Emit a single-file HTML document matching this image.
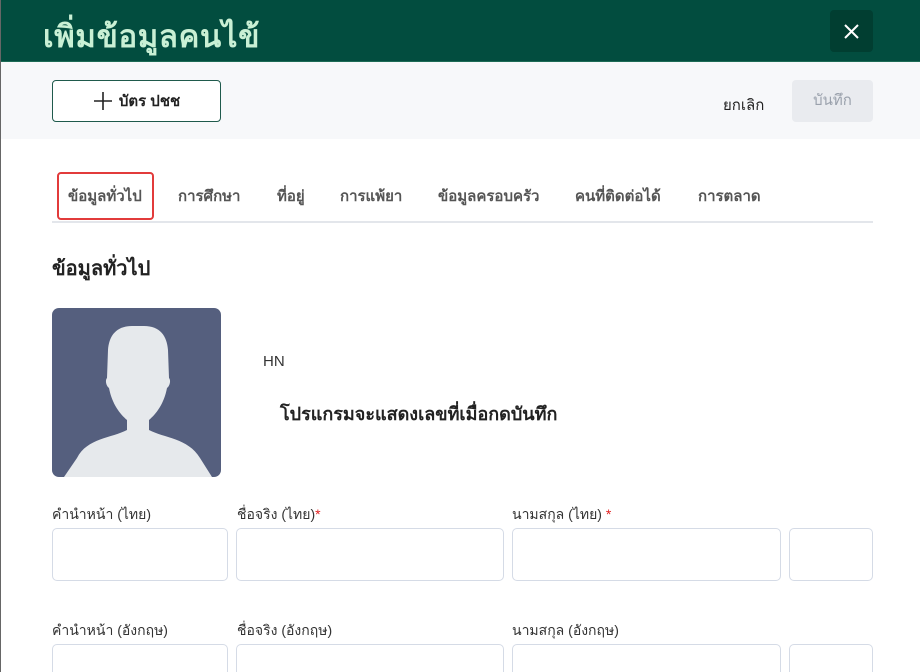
<!DOCTYPE html>
<html style="overflow:hidden;width:920px;height:672px"><head><meta charset="utf-8"><style>
*{box-sizing:border-box;margin:0;padding:0}
body{width:920px;height:672px;overflow:hidden;background:#fff;font-family:"Liberation Sans","Noto Sans CJK SC",sans-serif;position:relative}
.lb{position:absolute;left:0;top:0;width:1px;height:672px;background:#666;z-index:5}
.hdr{position:absolute;left:0;top:0;width:920px;height:62px;background:#024d3f;border-bottom:1px solid #1d6b55}
.hdr h1{position:absolute;left:43px;top:11px;font-size:31px;font-weight:bold;color:#c9f0d5;letter-spacing:0.7px}
.x{position:absolute;left:830px;top:10px;width:43px;height:42px;background:#013e31;border-radius:4px}
.bar{position:absolute;left:0;top:62px;width:920px;height:77px;background:#f7f8fa}
.btn1{position:absolute;left:52px;top:80px;width:169px;height:42px;border:1px solid #1f5a4c;border-radius:4px;background:#fff;font-size:15px;font-weight:bold;color:#222;display:flex;align-items:center;justify-content:center;gap:6px}
.cancel{position:absolute;left:723px;top:93px;font-size:15px;color:#222}
.save{position:absolute;left:792px;top:80px;width:81px;height:42px;background:#e9ebef;border-radius:4px;color:#9aa1ac;font-size:15px;text-align:center;line-height:42px}
.tab{position:absolute;top:184px;font-size:15px;color:#555;font-weight:bold}
.sel{position:absolute;left:57px;top:172px;width:97px;height:48px;border:2.5px solid #e23b3b;border-radius:4px}
.line{position:absolute;left:52px;top:221px;width:821px;height:2px;background:#e3e6eb}
h2{position:absolute;left:52px;top:252px;font-size:20px;font-weight:bold;color:#222}
.av{position:absolute;left:52px;top:308px;width:169px;height:169px;background:#555f7e;border-radius:7px;overflow:hidden}
.lbl{position:absolute;font-size:14px;color:#333}
.in{position:absolute;height:53px;border:1px solid #d5dbe6;border-radius:5px;background:#fff}
</style></head><body>
<div class="lb"></div>
<div class="hdr"><h1>เพิ่มข้อมูลคนไข้</h1>
<div class="x"><svg width="43" height="42"><path d="M15 15L28 28M28 15L15 28" stroke="#fff" stroke-width="2"/></svg></div></div>
<div class="bar"></div>
<div class="btn1"><svg width="20" height="20"><path d="M10 1V19M1 10H19" stroke="#222" stroke-width="1.6"/></svg>บัตร ปชช</div>
<div class="cancel">ยกเลิก</div>
<div class="save">บันทึก</div>
<div class="sel"></div>
<div class="tab" style="left:68px">ข้อมูลทั่วไป</div>
<div class="tab" style="left:178px">การศึกษา</div>
<div class="tab" style="left:277px">ที่อยู่</div>
<div class="tab" style="left:340px">การแพ้ยา</div>
<div class="tab" style="left:438px">ข้อมูลครอบครัว</div>
<div class="tab" style="left:575px">คนที่ติดต่อได้</div>
<div class="tab" style="left:698px">การตลาด</div>
<div class="line"></div>
<h2>ข้อมูลทั่วไป</h2>
<div class="av"><svg width="169" height="169"><path d="M80 18C64 18 57 28 56 42L55 70C53 72 54 78 57 80C60 96 68 106 75 112L75 122C60 130 35 130 25 150L12 169H160L148 150C136 130 112 130 97 122L97 112C104 106 112 96 115 80C118 78 119 72 117 70L116 42C115 28 108 18 92 18Z" fill="#e6e9ec"/></svg></div>
<div class="lbl" style="left:263px;top:353px;font-size:15px">HN</div>
<div class="lbl" style="left:280px;top:399px;font-size:18px;font-weight:bold;color:#222">โปรแกรมจะแสดงเลขที่เมื่อกดบันทึก</div>
<div class="lbl" style="left:52px;top:504px">คำนำหน้า (ไทย)</div>
<div class="lbl" style="left:237px;top:504px">ชื่อจริง (ไทย)<span style="color:#e02020">*</span></div>
<div class="lbl" style="left:512px;top:504px">นามสกุล (ไทย) <span style="color:#e02020">*</span></div>
<div class="in" style="left:52px;top:528px;width:176px"></div>
<div class="in" style="left:236px;top:528px;width:268px"></div>
<div class="in" style="left:512px;top:528px;width:269px"></div>
<div class="in" style="left:789px;top:528px;width:84px"></div>
<div class="lbl" style="left:52px;top:620px">คำนำหน้า (อังกฤษ)</div>
<div class="lbl" style="left:237px;top:620px">ชื่อจริง (อังกฤษ)</div>
<div class="lbl" style="left:512px;top:620px">นามสกุล (อังกฤษ)</div>
<div class="in" style="left:52px;top:644px;width:176px"></div>
<div class="in" style="left:236px;top:644px;width:268px"></div>
<div class="in" style="left:512px;top:644px;width:269px"></div>
<div class="in" style="left:789px;top:644px;width:84px"></div>
</body></html>
